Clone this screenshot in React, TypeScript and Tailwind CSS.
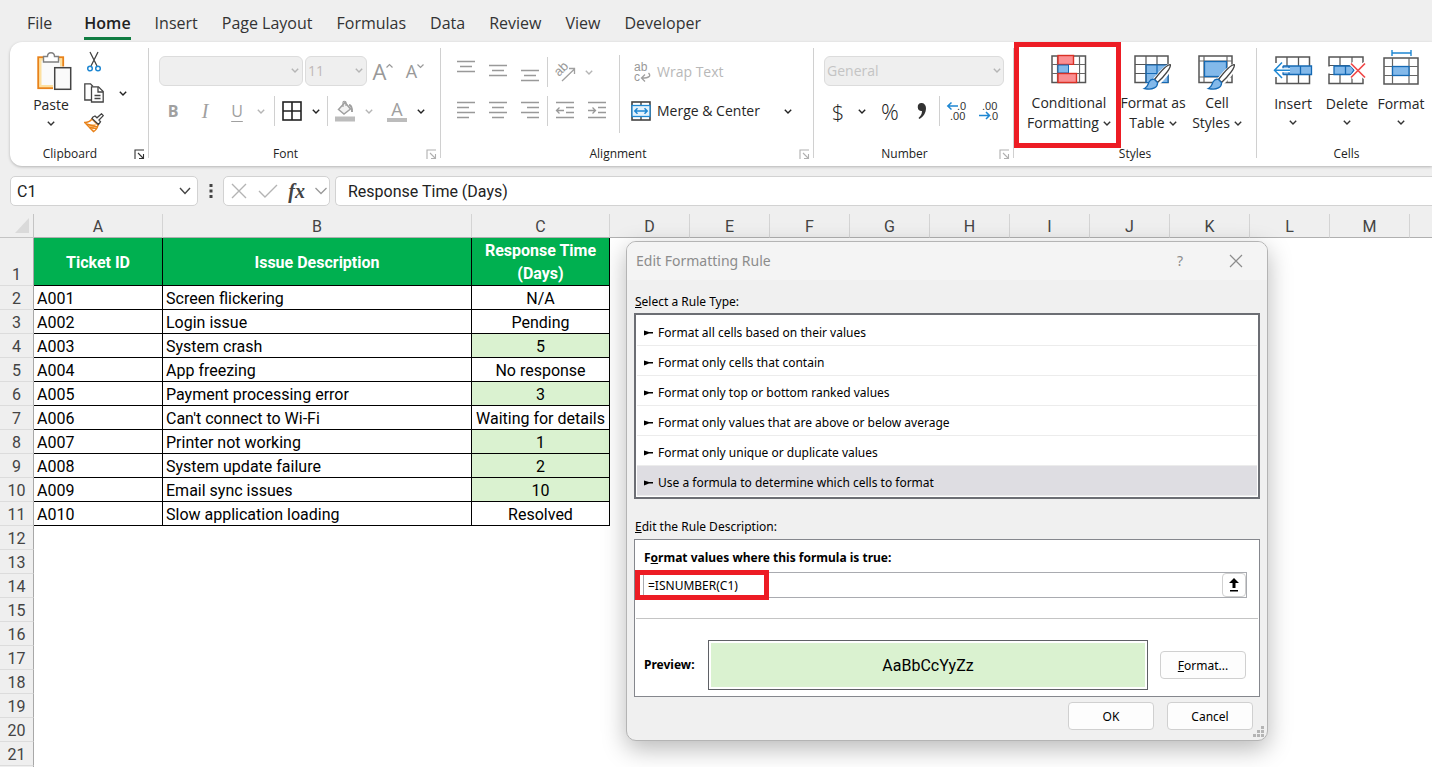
import React from 'react';

type RowData = { id: string; issue: string; response: string; hit?: boolean };

const tabs = ['File', 'Home', 'Insert', 'Page Layout', 'Formulas', 'Data', 'Review', 'View', 'Developer'];

const tickets: RowData[] = [
  { id: 'A001', issue: 'Screen flickering', response: 'N/A' },
  { id: 'A002', issue: 'Login issue', response: 'Pending' },
  { id: 'A003', issue: 'System crash', response: '5', hit: true },
  { id: 'A004', issue: 'App freezing', response: 'No response' },
  { id: 'A005', issue: 'Payment processing error', response: '3', hit: true },
  { id: 'A006', issue: "Can't connect to Wi-Fi", response: 'Waiting for details' },
  { id: 'A007', issue: 'Printer not working', response: '1', hit: true },
  { id: 'A008', issue: 'System update failure', response: '2', hit: true },
  { id: 'A009', issue: 'Email sync issues', response: '10', hit: true },
  { id: 'A010', issue: 'Slow application loading', response: 'Resolved' },
];

const extraColumns = ['D', 'E', 'F', 'G', 'H', 'I', 'J', 'K', 'L', 'M'];
const emptyRows = [12, 13, 14, 15, 16, 17, 18, 19, 20, 21];

const ruleTypes = [
  'Format all cells based on their values',
  'Format only cells that contain',
  'Format only top or bottom ranked values',
  'Format only values that are above or below average',
  'Format only unique or duplicate values',
  'Use a formula to determine which cells to format',
];

// ===== Small shared pieces =====
const Chevron: React.FC<{ className?: string }> = ({ className = 'text-[#333]' }) => (
  <svg width="8" height="5" viewBox="0 0 8 5" fill="none" stroke="currentColor" strokeWidth="1.4" className={className}>
    <path d="M0.8 0.8 L4 4 L7.2 0.8" />
  </svg>
);

const DropButton: React.FC<{ label: string; off?: boolean }> = ({ label, off }) => (
  <button aria-label={label} className="w-4 h-full flex items-center justify-center shrink-0">
    <Chevron className={off ? 'text-[#b5b5b5]' : 'text-[#222]'} />
  </button>
);

const Tool: React.FC<{ label: string; children: React.ReactNode }> = ({ label, children }) => (
  <button aria-label={label} className="w-8 h-full flex items-center justify-center shrink-0">
    {children}
  </button>
);

const Divider = () => <div className="mx-px w-px h-[30px] bg-[#d0d0d0] shrink-0" />;

const Launcher: React.FC<{ off?: boolean }> = ({ off }) => (
  <svg
    width="11" height="11" viewBox="0 0 11 11" fill="none" stroke="currentColor" strokeWidth="1.1"
    className={off ? 'text-[#b0b0b0]' : 'text-[#333]'}
  >
    <path d="M1 10 V1 H10 M4 4 L9.5 9.5 M9.5 5 V9.5 H5" />
  </svg>
);

type GroupProps = {
  name: string;
  className: string;
  launcher?: 'on' | 'off';
  children: React.ReactNode;
};

const Group: React.FC<GroupProps> = ({ name, className, launcher, children }) => (
  <>
    <section className={`relative flex flex-col shrink-0 ${className}`}>
      <div className="h-24 flex">{children}</div>
      <div className="h-5 flex items-center">
        <span className="flex-1 text-center text-xs text-[#222]">{name}</span>
        {launcher && (
          <button aria-label={`${name} settings`} className="w-[18px] flex justify-center">
            <Launcher off={launcher === 'off'} />
          </button>
        )}
      </div>
    </section>
    <div className="w-px h-[110px] bg-[#d0d0d0] shrink-0" />
  </>
);

const Lines: React.FC<{ rows: [number, number, number][] }> = ({ rows }) => (
  <svg width="20" height="30" viewBox="0 0 20 30" stroke="#999" strokeWidth="1.3">
    {rows.map(([x1, x2, y]) => <path key={y} d={`M${x1} ${y} H${x2}`} />)}
  </svg>
);

// ===== Ribbon icons =====
const PasteIcon = () => (
  <svg width="36" height="40" viewBox="0 0 36 40" fill="none">
    <rect x="2.2" y="6.2" width="25" height="31" fill="#fde0a0" stroke="#e8821a" strokeWidth="1.8" />
    <rect x="5.5" y="9.5" width="18.5" height="24.5" fill="#fafafa" />
    <path d="M7.5 11 V5.5 H11.5 C11.5 0.4 18.5 0.4 18.5 5.5 H22.5 V11 Z" fill="#fff" stroke="#808080" strokeWidth="1.4" />
    <rect x="17" y="15.5" width="19" height="25" fill="#fff" />
    <rect x="18.7" y="16.7" width="16" height="21.6" fill="#fafafa" stroke="#444" strokeWidth="1.5" />
  </svg>
);

const CutIcon = () => (
  <svg width="20" height="22" viewBox="0 0 20 22" fill="none">
    <path d="M6 1 L13 15 M14 1 L7 15" stroke="#444" strokeWidth="1.3" />
    <circle cx="6" cy="17.5" r="2.3" stroke="#1e87d2" strokeWidth="1.5" />
    <circle cx="14" cy="17.5" r="2.3" stroke="#1e87d2" strokeWidth="1.5" />
  </svg>
);

const CopyIcon = () => (
  <svg width="20" height="20" viewBox="0 0 20 20" fill="none" stroke="#444" strokeWidth="1.3">
    <path d="M7 17 H0.8 V0.8 H6.5 L9 3.5" />
    <path d="M7.5 3.8 H14.5 L19.2 8.5 V19 H7.5 Z" fill="#fff" />
    <path d="M14 4 V9 H19 M10.5 12.5 H16.5 M10.5 15.5 H16.5" />
  </svg>
);

const BrushIcon = () => (
  <svg width="20" height="20" viewBox="0 0 20 20" fill="none">
    <path d="M8 6 C6 8.5 3.5 9.5 0.8 9.5 L9.5 18.5 C11.5 17.5 13.5 15 14 12 Z" fill="#fff" stroke="#e8821a" strokeWidth="1.5" />
    <path d="M4 12 L12 11 L9 17 Z" fill="#fbb867" />
    <path d="M2.5 11 L13.5 14 M5.5 14.5 L12 15.5" stroke="#e8821a" strokeWidth="1.3" />
    <path d="M9 4 L11 3 L13 4.8 L17.5 0.8 L19.3 2.6 L15 7 L16.5 8.8 L14.5 11.5 L8 5.5 Z" fill="#fff" stroke="#444" strokeWidth="1.3" />
  </svg>
);

const BordersIcon = () => (
  <svg width="20" height="20" viewBox="0 0 20 20" fill="none" stroke="#222" strokeWidth="1.6">
    <rect x="1" y="1" width="18" height="18" />
    <path d="M10 1 V19 M1 10 H19" />
  </svg>
);

const FillIcon = () => (
  <svg width="20" height="22" viewBox="0 0 20 22" fill="none">
    <path d="M3.5 9.5 L10 2.5 L15.5 9 L9 14 Z" fill="#f2f2f2" stroke="#a0a0a0" strokeWidth="1.5" />
    <path d="M8 7 V2.5 C8 0.8 11 0.8 11 2.5 V6" stroke="#a0a0a0" strokeWidth="1.2" />
    <path d="M14 5 C16.5 5 17 7 17 12" stroke="#a0a0a0" strokeWidth="2" />
    <rect x="0" y="16.5" width="20" height="5" fill="#bcbcbc" />
  </svg>
);

const OrientationIcon = () => (
  <svg width="22" height="22" viewBox="0 0 22 22" fill="none" stroke="#a0a0a0" strokeWidth="1.3" className="overflow-visible">
    <text x="0" y="0" transform="translate(5 16) rotate(-45)" fill="#999" stroke="none" fontSize="13" fontFamily="Liberation Sans">ab</text>
    <path d="M8 20 L20.5 8 M15 7.5 H20.5 V13" />
  </svg>
);

const IndentIcon: React.FC<{ right?: boolean }> = ({ right }) => (
  <svg width="20" height="20" viewBox="0 0 20 20" fill="none" stroke="#999" strokeWidth="1.3">
    <path d="M1 1.5 H19 M11 6.5 H19 M11 11.5 H19 M1 16.5 H19" />
    <path d={right ? 'M1 9.5 H8.5 M5.5 6.5 L8.5 9.5 L5.5 12.5' : 'M9 9.5 H1.5 M4.5 6.5 L1.5 9.5 L4.5 12.5'} />
  </svg>
);

const WrapIcon = () => (
  <svg width="18" height="24" viewBox="0 0 18 24" fill="none" stroke="#a0a0a0" strokeWidth="1.3" className="overflow-visible">
    <g fill="#999" stroke="none" fontSize="12" fontFamily="Liberation Sans">
      <text x="1" y="11">ab</text>
      <text x="1" y="21">c</text>
    </g>
    <path d="M15.5 13 C18.5 16 16 18 9 18 M12 14.5 L8.5 18 L12 21.5" />
  </svg>
);

const MergeIcon = () => (
  <svg width="20" height="20" viewBox="0 0 20 20" fill="none">
    <rect x="1" y="1" width="18" height="18" fill="#fff" stroke="#444" strokeWidth="1.6" />
    <path d="M10 1 V5 M10 15 V19" stroke="#444" strokeWidth="1.4" />
    <rect x="1" y="4.5" width="18" height="11" fill="#e4f2fc" stroke="#1e87d2" strokeWidth="1.3" />
    <path d="M4 10 H16 M6.5 7.3 L3.8 10 L6.5 12.7 M13.5 7.3 L16.2 10 L13.5 12.7" stroke="#1e87d2" strokeWidth="1.5" />
  </svg>
);

const DecimalIcon: React.FC<{ less?: boolean }> = ({ less }) => (
  <svg width="20" height="22" viewBox="0 0 20 22" fill="none" className="overflow-visible">
    <g fill="#333" fontFamily="Liberation Sans" fontSize="11">
      {less ? (
        <>
          <text x="3" y="10">.00</text>
          <text x="10" y="20">.0</text>
        </>
      ) : (
        <>
          <text x="10" y="10">.0</text>
          <text x="3" y="20">.00</text>
        </>
      )}
    </g>
    {less
      ? <path d="M0 15.5 H10.5 M7 12 L10.5 15.5 L7 19" stroke="#1e87d2" strokeWidth="1.5" />
      : <path d="M11 6 H0.8 M4.5 2.5 L0.8 6 L4.5 9.5" stroke="#1e87d2" strokeWidth="1.5" />}
  </svg>
);

const ConditionalIcon = () => (
  <svg width="36" height="30" viewBox="0 0 36 30" fill="none">
    <rect x="1" y="2" width="33.5" height="26.5" fill="#fff" stroke="#555" strokeWidth="1.5" />
    <path d="M6.5 2 V28 M28.5 2 V28 M1 10.5 H34 M1 19.5 H34" stroke="#666" strokeWidth="1.2" />
    <rect x="7" y="1.5" width="15.5" height="9" fill="#fb8f92" stroke="#d93025" strokeWidth="1.4" />
    <rect x="17" y="11" width="11" height="8" fill="#fff" />
    <rect x="7" y="11" width="10.5" height="8" fill="#83b9ea" stroke="#1469b4" strokeWidth="1" />
    <rect x="7" y="19.5" width="18.5" height="9" fill="#fb8f92" stroke="#d93025" strokeWidth="1.4" />
  </svg>
);

const PaintBrush = () => (
  <>
    <path d="M38 11 C35 10 29 16 21 26 L25 30 C33 22 39 15 38 11 Z" fill="#fff" stroke="#fff" strokeWidth="3" />
    <path d="M37.2 10.6 C34.5 10.5 28 17 21.5 25.5 L24.5 28.5 C32 21.5 38.5 13 37.2 10.6 Z" fill="#fff" stroke="#444" strokeWidth="1.4" />
    <path d="M24.5 28.5 C25 33 20 36.5 11.5 34.5 C15 33 14.5 31 16 28 C17.5 25.5 20 25 21.5 25.5 Z" fill="#83b9ea" stroke="#1469b4" strokeWidth="1.3" />
  </>
);

const TableFormatIcon = () => (
  <svg width="40" height="36" viewBox="0 0 40 36" fill="none">
    <rect x="2" y="2" width="33" height="26.5" fill="#fff" stroke="#555" strokeWidth="1.5" />
    <rect x="13" y="11" width="22" height="17.5" fill="#83b9ea" />
    <path d="M2 10.5 H35 M2 19.5 H13 M13 2 V28 M24 2 V11" stroke="#555" strokeWidth="1.2" />
    <path d="M13 11 H35 V28.5 H13 Z M13 19.5 H35 M24 11 V28" stroke="#1469b4" strokeWidth="1.2" />
    <PaintBrush />
  </svg>
);

const CellStylesIcon = () => (
  <svg width="40" height="36" viewBox="0 0 40 36" fill="none">
    <rect x="2" y="2" width="33" height="26.5" fill="#fff" stroke="#555" strokeWidth="1.5" />
    <path d="M7 2 V28 M30 2 V28 M2 7 H35 M2 23 H35" stroke="#666" strokeWidth="1.2" />
    <rect x="7.5" y="7.5" width="22" height="15" fill="#83b9ea" stroke="#1469b4" strokeWidth="1.3" />
    <PaintBrush />
  </svg>
);

const InsertIcon = () => (
  <svg width="40" height="30" viewBox="0 0 40 30" fill="none">
    <rect x="3" y="2" width="33.5" height="26.5" fill="#fff" stroke="#555" strokeWidth="1.5" />
    <path d="M14 2 V28 M25.5 2 V28" stroke="#555" strokeWidth="1.3" />
    <path d="M0 8 H10 V22 H0 Z" fill="#fff" />
    <path d="M10 11 H38.5 V19.5 H10 Z" fill="#83b9ea" stroke="#1469b4" strokeWidth="1.3" />
    <path d="M16 11 V19.5 M27.5 11 V19.5" stroke="#1469b4" strokeWidth="1.3" />
    <path d="M17 15.2 H2 M9 8.5 L1.5 15.2 L9 22" stroke="#fff" strokeWidth="4" />
    <path d="M17 15.2 H2 M9 7.5 L1.5 15.2 L9 23" stroke="#1e87d2" strokeWidth="1.5" />
  </svg>
);

const DeleteIcon = () => (
  <svg width="40" height="30" viewBox="0 0 40 30" fill="none">
    <rect x="2" y="2" width="34" height="26.5" fill="#fff" stroke="#555" strokeWidth="1.5" />
    <path d="M13 2 V28 M25 2 V28 M2 10.5 H36 M2 19.5 H36" stroke="#555" strokeWidth="1.2" />
    <path d="M0 11.5 H7 V18.5 H0 Z M24 8 H40 V22 H28 Z" fill="#fff" />
    <path d="M7 11 H24 L27 15 L24 19.5 H7 Z" fill="#83b9ea" stroke="#1469b4" strokeWidth="1.3" />
    <path d="M18.5 11 V19.5" stroke="#1469b4" strokeWidth="1.3" />
    <path d="M24 8.5 L38 22.5 M38 8.5 L24 22.5" stroke="#fff" strokeWidth="4" />
    <path d="M24 8.5 L38 22.5 M38 8.5 L24 22.5" stroke="#f04848" strokeWidth="1.7" />
  </svg>
);

const FormatIcon = () => (
  <svg width="38" height="36" viewBox="0 0 38 36" fill="none">
    <path d="M10 4 H29 M10 1 V7 M29 1 V7" stroke="#1e87d2" strokeWidth="1.4" />
    <rect x="2" y="9" width="34" height="26" fill="#fff" stroke="#555" strokeWidth="1.5" />
    <path d="M10.5 9 V35 M27 9 V35 M2 17.5 H36 M2 26.5 H36" stroke="#666" strokeWidth="1.2" />
    <rect x="10.5" y="17.5" width="16.5" height="9" fill="#83b9ea" stroke="#1469b4" strokeWidth="1.3" />
  </svg>
);

// ===== Ribbon =====
const StyleButton: React.FC<{ lines: [string, string]; className: string; children: React.ReactNode }> = ({
  lines, className, children,
}) => (
  <button className={`flex flex-col items-center pt-1.5 text-sm leading-5 whitespace-nowrap shrink-0 ${className}`}>
    <span className="h-[39px] flex items-start">{children}</span>
    <span>{lines[0]}</span>
    <span className="flex items-center gap-1">{lines[1]}<Chevron /></span>
  </button>
);

const CellButton: React.FC<{ label: string; children: React.ReactNode }> = ({ label, children }) => (
  <button className="w-[54px] flex flex-col items-center text-sm leading-5 shrink-0">
    <span className="h-[46px] flex items-end pb-[9px]">{children}</span>
    <span>{label}</span>
    <span className="h-4 flex items-center"><Chevron /></span>
  </button>
);

const Ribbon = () => (
  <div className="ml-2.5 h-[124px] shrink-0 pt-1.5 flex bg-white rounded-l-xl shadow-[0_1px_3px_rgba(0,0,0,0.25)] overflow-hidden text-[#262626]">
    <Group name="Clipboard" className="w-[138px]" launcher="on">
      <button className="ml-4 w-[50px] pt-[3px] flex flex-col items-center text-sm leading-5">
        <span className="ml-1.5"><PasteIcon /></span>
        <span className="mt-1">Paste</span>
        <span className="h-4 flex items-center"><Chevron /></span>
      </button>
      <div className="ml-2 flex flex-col w-5 pt-[3px] gap-[10px]">
        <button aria-label="Cut"><CutIcon /></button>
        <button aria-label="Copy"><CopyIcon /></button>
        <button aria-label="Format Painter"><BrushIcon /></button>
      </div>
      <div className="ml-[11px] h-[90px]"><DropButton label="Copy options" /></div>
    </Group>

    <Group name="Font" className="w-[291px]" launcher="off">
      <div className="pt-2 flex flex-col gap-2.5">
        <div className="h-[30px] pl-2.5 flex items-center">
          <div className="relative">
            <select aria-label="Font name" className="block w-36 h-[30px] appearance-none rounded-md border border-[#dcdcdc] bg-[#efefef]" />
            <span className="absolute right-1 top-3"><Chevron className="text-[#b5b5b5]" /></span>
          </div>
          <div className="relative ml-0.5">
            <select aria-label="Font size" className="block w-[62px] h-[30px] pl-0.5 appearance-none rounded-md border border-[#dcdcdc] bg-[#efefef] text-sm text-[#c0b8b8]">
              <option>11</option>
            </select>
            <span className="absolute right-1 top-3"><Chevron className="text-[#b5b5b5]" /></span>
          </div>
          <Tool label="Increase Font Size">
            <span className="text-[22px] text-[#999]">A</span>
            <svg width="7" height="16" viewBox="0 0 7 16" fill="none" stroke="#999" strokeWidth="1.2"><path d="M0.5 4.5 L3.5 1.5 L6.5 4.5" /></svg>
          </Tool>
          <Tool label="Decrease Font Size">
            <span className="text-lg text-[#999]">A</span>
            <svg width="7" height="16" viewBox="0 0 7 16" fill="none" stroke="#999" strokeWidth="1.2"><path d="M0.5 1.5 L3.5 4.5 L6.5 1.5" /></svg>
          </Tool>
        </div>
        <div className="h-[30px] pl-2 flex items-center text-lg text-[#a0a0a0]">
          <Tool label="Bold"><b className="text-base">B</b></Tool>
          <Tool label="Italic"><i className="font-['Liberation_Serif',serif] text-xl">I</i></Tool>
          <Tool label="Underline"><u className="text-base underline-offset-4">U</u></Tool>
          <DropButton label="Underline options" off />
          <div className="w-1" />
          <Divider />
          <Tool label="Borders"><BordersIcon /></Tool>
          <DropButton label="Border options" />
          <div className="w-0.5" />
          <Divider />
          <Tool label="Fill Color"><FillIcon /></Tool>
          <DropButton label="Fill options" off />
          <div className="w-1" />
          <Tool label="Font Color">
            <span className="w-5 h-[21px] leading-4 border-b-4 border-[#bcbcbc]">A</span>
          </Tool>
          <DropButton label="Font color options" />
        </div>
      </div>
    </Group>

    <Group name="Alignment" className="w-[372px]" launcher="off">
      <div className="pt-[9px] pl-[9px] flex flex-col gap-[9px] w-[178px]">
        <div className="h-[30px] flex items-center">
          <Tool label="Top Align"><Lines rows={[[1, 19, 4.5], [4, 16, 9.5], [1, 19, 14.5]]} /></Tool>
          <Tool label="Middle Align"><Lines rows={[[1, 19, 8.5], [4, 16, 13.5], [1, 19, 18.5]]} /></Tool>
          <Tool label="Bottom Align"><Lines rows={[[1, 19, 13.5], [4, 16, 18.5], [1, 19, 23.5]]} /></Tool>
          <Divider />
          <Tool label="Orientation"><OrientationIcon /></Tool>
          <DropButton label="Orientation options" off />
        </div>
        <div className="h-[30px] flex items-center">
          <Tool label="Align Left"><Lines rows={[[1, 19, 6.5], [1, 13, 11.5], [1, 19, 16.5], [1, 13, 21.5]]} /></Tool>
          <Tool label="Center"><Lines rows={[[1, 19, 6.5], [4, 16, 11.5], [1, 19, 16.5], [4, 16, 21.5]]} /></Tool>
          <Tool label="Align Right"><Lines rows={[[1, 19, 6.5], [7, 19, 11.5], [1, 19, 16.5], [7, 19, 21.5]]} /></Tool>
          <Divider />
          <Tool label="Decrease Indent"><IndentIcon /></Tool>
          <Tool label="Increase Indent"><IndentIcon right /></Tool>
        </div>
      </div>
      <div className="mt-[7px] w-px h-[78px] bg-[#d0d0d0]" />
      <div className="ml-[5px] pt-[9px] flex flex-col gap-[9px] w-[171px] text-sm">
        <button className="h-[30px] flex items-center text-[#b8b8b8]">
          <span className="w-8 pl-2"><WrapIcon /></span>Wrap Text
        </button>
        <div className="h-[30px] flex items-center">
          <button className="flex items-center">
            <span className="w-8 pl-1.5"><MergeIcon /></span>Merge &amp; Center
          </button>
          <span className="ml-auto"><DropButton label="Merge options" /></span>
        </div>
      </div>
    </Group>

    <Group name="Number" className="w-[199px]" launcher="off">
      <div className="pt-2 flex flex-col gap-2.5">
        <div className="relative ml-2.5">
          <select aria-label="Number format" className="block w-[180px] h-[30px] pl-0.5 appearance-none rounded-md border border-[#dcdcdc] bg-[#efefef] text-sm text-[#c4c4c4]">
            <option>General</option>
          </select>
          <span className="absolute right-1 top-3"><Chevron className="text-[#b5b5b5]" /></span>
        </div>
        <div className="h-[30px] pl-2 flex items-center text-[#222]">
          <Tool label="Accounting Number Format"><span className="text-[22px] font-light">$</span></Tool>
          <DropButton label="Accounting options" />
          <div className="w-1" />
          <Tool label="Percent Style"><span className="text-[22px] font-light">%</span></Tool>
          <Tool label="Comma Style">
            <svg width="10" height="18" viewBox="0 0 10 18" fill="#333"><path d="M4.5 1 A4 4 0 1 0 5 9 C5 12.5 3.5 14 1.5 16 L2.5 17 C6.5 14.5 9 11 9 6 C9 3 7 1 4.5 1 Z" /></svg>
          </Tool>
          <Divider />
          <Tool label="Increase Decimal"><DecimalIcon /></Tool>
          <Tool label="Decrease Decimal"><DecimalIcon less /></Tool>
        </div>
      </div>
    </Group>

    <Group name="Styles" className="w-[242px]">
      <StyleButton lines={['Conditional', 'Formatting']} className="w-[107px] pl-[3px]"><ConditionalIcon /></StyleButton>
      <StyleButton lines={['Format as', 'Table']} className="w-16"><TableFormatIcon /></StyleButton>
      <StyleButton lines={['Cell', 'Styles']} className="w-16"><CellStylesIcon /></StyleButton>
      <div className="absolute -top-1.5 left-0 w-[107px] h-[106px] border-[5px] border-[#ed1c24]" />
    </Group>

    <Group name="Cells" className="w-[178px] pl-[9px] pr-2">
      <CellButton label="Insert"><InsertIcon /></CellButton>
      <CellButton label="Delete"><DeleteIcon /></CellButton>
      <CellButton label="Format"><FormatIcon /></CellButton>
    </Group>
  </div>
);

// ===== Formula bar =====
const FormulaBar = () => (
  <div className="mt-2.5 ml-2.5 h-[30px] shrink-0 flex text-base text-[#222] font-['Roboto',sans-serif]">
    <div className="w-[188px] flex items-center bg-white border border-[#d2d2d2] rounded-[5px]">
      <input aria-label="Name Box" defaultValue="C1" className="w-0 flex-1 pt-0.5 pl-1.5 outline-none" />
      <button aria-label="Name list" className="w-6 flex justify-center">
        <svg width="12" height="8" viewBox="0 0 12 8" fill="none" stroke="#444" strokeWidth="1.4"><path d="M1 1 L6 6.5 L11 1" /></svg>
      </button>
    </div>
    <div className="w-[25px] flex items-center justify-center">
      <svg width="4" height="14" viewBox="0 0 4 14" fill="#444">
        <rect x="0.5" y="0" width="3" height="3" /><rect x="0.5" y="5.5" width="3" height="3" /><rect x="0.5" y="11" width="3" height="3" />
      </svg>
    </div>
    <div className="w-[107px] pl-1.5 pr-0.5 flex items-center justify-between bg-white border border-[#d2d2d2] rounded-[5px]">
      <button aria-label="Cancel entry">
        <svg width="18" height="16" viewBox="0 0 18 16" fill="none" stroke="#b4b4b4" strokeWidth="1.4"><path d="M2 1 L16 15 M16 1 L2 15" /></svg>
      </button>
      <button aria-label="Enter">
        <svg width="20" height="16" viewBox="0 0 20 16" fill="none" stroke="#b4b4b4" strokeWidth="1.4"><path d="M1 8 L7 14 L19 2" /></svg>
      </button>
      <button aria-label="Insert Function" className="font-['Liberation_Serif',serif] italic font-bold text-xl text-[#444]">fx</button>
      <button aria-label="Function list">
        <svg width="12" height="8" viewBox="0 0 12 8" fill="none" stroke="#999" strokeWidth="1.3"><path d="M0.5 1 L6 6.5 L11.5 1" /></svg>
      </button>
    </div>
    <input
      aria-label="Formula"
      defaultValue="Response Time (Days)"
      className="ml-[5px] flex-1 min-w-0 pt-0.5 pl-3 bg-white border border-r-0 border-[#d2d2d2] rounded-l-[5px] outline-none"
    />
  </div>
);

// ===== Sheet =====
const RowHead: React.FC<{ n?: number }> = ({ n }) => (
  <th scope="row" className="bg-[#efefef] border-r border-b border-r-[#a8a8a8] border-b-[#dcdcdc] font-normal text-[#444] align-bottom">
    {n}
  </th>
);

const Sheet = () => (
  <table className="table-fixed w-[1490px] border-separate border-spacing-0 text-base leading-[21px] text-black font-['Roboto',sans-serif]">
    <colgroup>
      <col className="w-[34px]" />
      <col className="w-[129px]" />
      <col className="w-[309px]" />
      <col className="w-[138px]" />
      {extraColumns.map((c) => <col key={c} className="w-20" />)}
      <col className="w-20" />
    </colgroup>
    <thead>
      <tr className="h-6 text-[#444]">
        <th aria-label="Select all" className="bg-[#efefef] border-r border-b border-[#c4c4c4]">
          <svg width="14" height="15" viewBox="0 0 14 15" fill="#dadada" className="ml-auto mr-1"><path d="M14 0 V15 H0 Z" /></svg>
        </th>
        {['A', 'B', 'C', ...extraColumns, ''].map((c) => (
          <th key={c} scope="col" className="pt-0.5 bg-[#efefef] border-r border-b border-r-[#d4d4d4] border-b-[#b0b0b0] font-normal">{c}</th>
        ))}
      </tr>
    </thead>
    <tbody>
      <tr className="h-12">
        <RowHead n={1} />
        {['Ticket ID', 'Issue Description', 'Response Time (Days)'].map((t) => (
          <td key={t} className="pt-px bg-[#00b050] border-r border-b border-black text-center text-white font-bold leading-[23px]">{t}</td>
        ))}
        <td colSpan={11} className="bg-white" />
      </tr>
      {tickets.map((t, i) => (
        <tr key={t.id} className="h-6">
          <RowHead n={i + 2} />
          <td className="pt-0.5 pl-[3px] bg-white border-r border-b border-black">{t.id}</td>
          <td className="pt-0.5 pl-[3px] bg-white border-r border-b border-black">{t.issue}</td>
          <td className={`pt-0.5 border-r border-b border-black text-center whitespace-nowrap ${t.hit ? 'bg-[#daf2d0]' : 'bg-white'}`}>{t.response}</td>
          <td colSpan={11} className="bg-white" />
        </tr>
      ))}
      {emptyRows.map((n) => (
        <tr key={n} className="h-6">
          <RowHead n={n} />
          <td colSpan={14} className="bg-white" />
        </tr>
      ))}
      <tr className="h-6">
        <RowHead />
        <td colSpan={14} className="bg-white" />
      </tr>
    </tbody>
  </table>
);

// ===== Dialog =====
const dialogButton = 'w-[86px] h-7 pt-px bg-[#fdfdfd] border border-[#d0d0d0] rounded text-xs';

const RuleDialog = () => (
  <div
    role="dialog"
    aria-label="Edit Formatting Rule"
    className="absolute left-[626px] top-[27px] w-[642px] bg-[#f0f0f0] border border-[#b4b4b4] rounded-[10px] shadow-[0_8px_24px_rgba(0,0,0,0.28)] text-xs text-black overflow-hidden font-['Noto_Sans',sans-serif]"
  >
    <div className="h-[38px] pl-[9px] pr-[22px] flex items-center bg-[#f4f4f4] text-[#8c8c8c]">
      <h2 className="flex-1 text-sm">Edit Formatting Rule</h2>
      <button aria-label="Help" className="w-4 mr-[41px] text-sm">?</button>
      <button aria-label="Close" className="w-4">
        <svg width="14" height="14" viewBox="0 0 14 14" fill="none" stroke="#8c8c8c" strokeWidth="1.2"><path d="M1 1 L13 13 M13 1 L1 13" /></svg>
      </button>
    </div>
    <div className="px-[7px]">
      <p className="pt-3 pl-px leading-5"><u>S</u>elect a Rule Type:</p>
      <ul role="listbox" aria-label="Select a Rule Type" className="mt-px p-px bg-white border-2 border-[#6c6e74]">
        {ruleTypes.map((rule, i) => (
          <li
            key={rule}
            role="option"
            aria-selected={i === 5}
            className={`h-[30px] pt-1 pl-[7px] flex items-center gap-[5px] border-b border-[#ececec] ${i === 5 ? 'bg-[#dedde2]' : ''}`}
          >
            <svg width="9" height="6" viewBox="0 0 9 6"><path d="M0 0.5 L5 2 H9 V3.5 H5 L0 5.5 Z" /></svg>
            {rule}
          </li>
        ))}
      </ul>

      <p className="pt-[18px] pl-px leading-5"><u>E</u>dit the Rule Description:</p>
      <div className="mt-0.5 bg-white border border-[#85878d]">
        <label htmlFor="formula" className="block pt-2 pl-[9px] leading-5 font-bold">
          F<u>o</u>rmat values where this formula is true:
        </label>
        <div className="relative mt-1 ml-2 mr-3 h-[26px] flex items-center border border-[#a9abb0]">
          <input id="formula" defaultValue="=ISNUMBER(C1)" className="flex-1 min-w-0 pt-0.5 pl-1 outline-none" />
          <button aria-label="Collapse dialog" className="w-6 h-6 flex items-center justify-center border border-[#d0d0d0] rounded">
            <svg width="10" height="14" viewBox="0 0 10 14"><path d="M5 0 L10 5 H6.5 V10 H3.5 V5 H0 Z M1 12 H9 V13.5 H1 Z" /></svg>
          </button>
          <div className="absolute -left-[9px] -top-[3px] w-[134px] h-[30px] border-[5px] border-[#ed1c24]" />
        </div>
        <div className="mt-5 mx-px h-px bg-[#c4c4c4]" />
        <div className="pt-[21px] pb-1.5 pl-[9px] pr-[13px] flex items-center">
          <span className="w-16 font-bold">Preview:</span>
          <div className="flex-1 p-0.5 border border-[#5f6166]">
            <div className="h-11 pt-0.5 flex items-center justify-center bg-[#daf2d0] text-base font-['Roboto',sans-serif]">AaBbCcYyZz</div>
          </div>
          <button className={`ml-3 ${dialogButton}`}><u>F</u>ormat...</button>
        </div>
      </div>
      <div className="pt-[5px] pb-2.5 pr-[7px] flex justify-end gap-[13px]">
        <button className={dialogButton}>OK</button>
        <button className={dialogButton}>Cancel</button>
      </div>
    </div>
    <svg width="12" height="12" viewBox="0 0 12 12" fill="#b4b4b4" className="absolute right-0.5 bottom-0.5">
      <path d="M8 0 H11 V3 H8 Z M4 4 H7 V7 H4 Z M8 4 H11 V7 H8 Z M0 8 H3 V11 H0 Z M4 8 H7 V11 H4 Z M8 8 H11 V11 H8 Z" />
    </svg>
  </div>
);

export default function App() {
  return (
    <div className="h-screen flex flex-col overflow-hidden bg-[#efefef] font-['Open_Sans',sans-serif]">
      <nav className="h-[42px] shrink-0 pl-[27px] flex items-start gap-6 text-base text-[#333]">
        {tabs.map((t) => (
          <button
            key={t}
            className={`mt-2 h-8 whitespace-nowrap border-b-[3px] ${
              t === 'Home' ? 'ml-2 border-[#107c41] font-semibold text-[#222]' : 'border-transparent'
            }`}
          >
            {t}
          </button>
        ))}
      </nav>
      <Ribbon />
      <FormulaBar />
      <main className="relative mt-2 flex-1 min-h-0 overflow-hidden">
        <Sheet />
        <RuleDialog />
      </main>
    </div>
  );
}
